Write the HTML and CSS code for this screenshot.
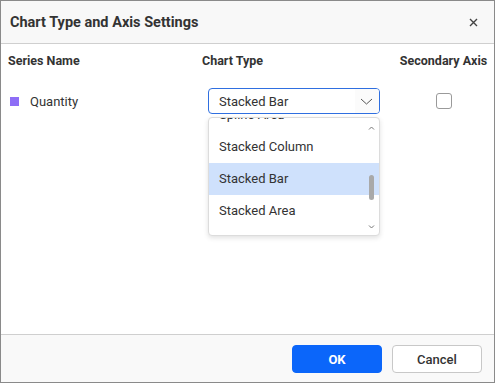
FILE: index.html
```html
<!DOCTYPE html>
<html>
<head>
<meta charset="utf-8">
<link rel="stylesheet" href="styles.css">
</head>
<body>
<div class="dialog">
  <div class="dlg-header">
    <span class="dlg-title">Chart Type and Axis Settings</span>
    <button class="close" aria-label="Close">
      <svg width="9" height="9" viewBox="0 0 9 9"><path d="M1 1 L8 8 M8 1 L1 8" stroke="#444" stroke-width="1.4" fill="none"/></svg>
    </button>
  </div>
  <div class="dlg-content">
    <div class="grid-row head">
      <div class="c1">Series Name</div>
      <div class="c2">Chart Type</div>
      <div class="c3">Secondary Axis</div>
    </div>
    <div class="grid-row item">
      <div class="c1 series"><span class="swatch"></span><span>Quantity</span></div>
      <div class="c2">
        <div class="dropdown">
          <div class="select">
            <span class="sel-text">Stacked Bar</span>
            <span class="chev"><svg width="13" height="7" viewBox="0 0 13 7"><path d="M1 1 L6.5 6 L12 1" stroke="#555" stroke-width="1" fill="none"/></svg></span>
          </div>
          <div class="popup">
            <ul class="list">
              <li>Spline Area</li>
              <li>Stacked Column</li>
              <li class="active">Stacked Bar</li>
              <li>Stacked Area</li>
              <li>Stacked Column 100%</li>
            </ul>
            <div class="scrollbar">
              <svg class="arr up" width="7" height="4" viewBox="0 0 7 4"><path d="M1 3.5 L3.5 1 L6 3.5" stroke="#777" stroke-width="1" fill="none"/></svg>
              <div class="thumb"></div>
              <svg class="arr down" width="7" height="4" viewBox="0 0 7 4"><path d="M1 0.5 L3.5 3 L6 0.5" stroke="#777" stroke-width="1" fill="none"/></svg>
            </div>
          </div>
        </div>
      </div>
      <div class="c3"><span class="checkbox"></span></div>
    </div>
  </div>
  <div class="dlg-footer">
    <button class="btn primary">OK</button>
    <button class="btn">Cancel</button>
  </div>
</div>
</body>
</html>
```
FILE: styles.css
```css
* { box-sizing: border-box; }
html, body { margin: 0; padding: 0; }
body {
  font-family: Roboto, "Liberation Sans", sans-serif;
  color: #333;
  background: #fff;
}
.dialog {
  width: 495px;
  height: 383px;
  border: 1px solid #8a8a8a;
  display: flex;
  flex-direction: column;
  background: #fff;
}
.dlg-header {
  height: 43px;
  flex: none;
  background: #f8f8f8;
  border-bottom: 1px solid #cfcfcf;
  display: flex;
  align-items: center;
  justify-content: space-between;
  padding: 0 16px 0 9px;
}
.dlg-title {
  font-size: 14.5px;
  font-weight: 700;
  color: #333;
}
.close {
  border: 0;
  background: transparent;
  padding: 0;
  width: 9px;
  height: 9px;
  display: flex;
}
.dlg-content {
  flex: 1;
  padding: 8px 7px 0 7px;
}
.grid-row {
  display: grid;
  grid-template-columns: 194px 198px 87px;
  align-items: center;
}
.head {
  font-size: 12.5px;
  font-weight: 700;
  line-height: 18px;
  white-space: nowrap;
}
.item {
  margin-top: 18px;
  font-size: 13px;
}
.series {
  display: flex;
  align-items: center;
  gap: 11px;
  padding-left: 2px;
}
.swatch {
  width: 9px;
  height: 9px;
  background: #8e6ef6;
  display: inline-block;
}
.dropdown {
  position: relative;
  margin-left: 6px;
  width: 172px;
}
.select {
  height: 26px;
  border: 1px solid #2f6fe0;
  border-radius: 4px;
  display: flex;
  align-items: center;
  justify-content: space-between;
  padding-left: 10px;
  overflow: hidden;
}
.sel-text { color: #333; }
.chev {
  width: 24px;
  height: 24px;
  display: flex;
  align-items: center;
  justify-content: center;
  background: #fbfbfb;
  padding-right: 2px;
}
.popup {
  position: absolute;
  top: 29px;
  left: 0;
  width: 172px;
  height: 119px;
  background: #fff;
  border: 1px solid #dcdcdc;
  border-radius: 4px;
  box-shadow: 0 2px 5px rgba(0,0,0,0.12);
  overflow: hidden;
  z-index: 2;
}
.list {
  list-style: none;
  margin: -19px 0 0 0;
  padding: 0;
}
.list li {
  height: 32px;
  line-height: 32px;
  padding-left: 10px;
  color: #333;
  font-size: 13px;
}
.list li.active { background: #cfe1fc; }
.scrollbar {
  position: absolute;
  right: 4px;
  top: 0;
  bottom: 0;
  width: 7px;
}
.arr { position: absolute; left: 0; }
.arr.up { top: 8px; }
.arr.down { bottom: 6px; }
.thumb {
  position: absolute;
  left: 1px;
  top: 57px;
  width: 5px;
  height: 25px;
  border-radius: 3px;
  background: #a9a9a9;
}
.c3 { display: flex; justify-content: center; }
.checkbox {
  width: 16px;
  height: 16px;
  border: 1px solid #9a9a9a;
  border-radius: 3px;
  display: inline-block;
  background: #fff;
}
.dlg-footer {
  height: 48px;
  flex: none;
  border-top: 1px solid #cfcfcf;
  background: #f9f9f9;
  display: flex;
  justify-content: flex-end;
  align-items: flex-start;
  gap: 10px;
  padding: 10px 12px 0 0;
}
.btn {
  width: 90px;
  height: 28px;
  border: 1px solid #c8c8c8;
  border-radius: 4px;
  background: #fff;
  color: #333;
  font-family: Roboto, "Liberation Sans", sans-serif;
  font-size: 13px;
  font-weight: 500;
}
.btn.primary {
  background: #0b66fa;
  border-color: #0b66fa;
  color: #fff;
  font-weight: 700;
}
```
